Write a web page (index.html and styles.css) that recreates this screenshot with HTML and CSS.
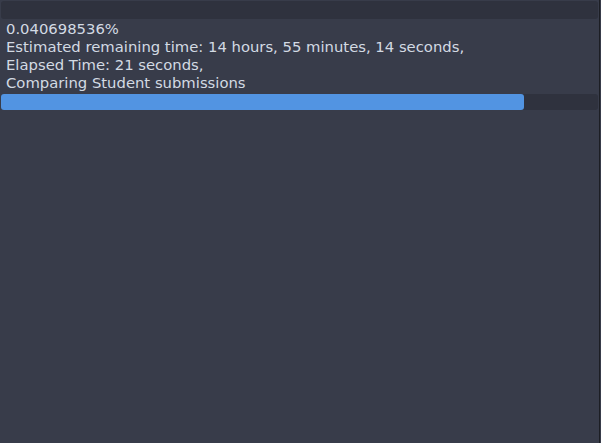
FILE: index.html
```html
<!DOCTYPE html>
<html>
<head>
<meta charset="utf-8">
<link rel="stylesheet" href="styles.css">
</head>
<body>
<div class="window">
  <div class="topbar"></div>
  <div class="info">
    <div class="line">0.040698536%</div>
    <div class="line">Estimated remaining time: 14 hours, 55 minutes, 14 seconds,</div>
    <div class="line">Elapsed Time: 21 seconds,</div>
    <div class="line">Comparing Student submissions</div>
  </div>
  <div class="progress"><div class="fill" style="width: 87.6%"></div></div>
</div>
</body>
</html>
```
FILE: styles.css
```css
html, body {
  margin: 0;
  padding: 0;
  background: #383c4a;
}
.window {
  width: 600px;
  height: 443px;
  box-sizing: border-box;
  border-right: 1px solid #1c1e24;
  padding: 1px 1px 0 1px;
  display: flex;
  flex-direction: column;
  font-family: "DejaVu Sans", sans-serif;
  font-size: 14.8px;
  color: #d3dae3;
}
.topbar {
  height: 18px;
  background: #2f323e;
  border-radius: 3px;
}
.info {
  padding: 1px 0 0 5px;
  display: flex;
  flex-direction: column;
}
.line {
  line-height: 18px;
  white-space: nowrap;
}
.progress {
  margin-top: 2px;
  height: 16px;
  background: #2f323e;
  border-radius: 3px;
  display: flex;
}
.fill {
  background: #5294e2;
  border-radius: 3px;
  height: 100%;
}
```
